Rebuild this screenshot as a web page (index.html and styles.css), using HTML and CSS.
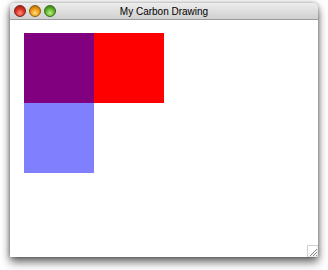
FILE: index.html
```html
<!DOCTYPE html>
<html>
<head>
<meta charset="utf-8">
<link rel="stylesheet" href="styles.css">
</head>
<body>
<div class="window">
  <div class="titlebar">
    <div class="lights">
      <span class="light red"></span>
      <span class="light orange"></span>
      <span class="light green"></span>
    </div>
    <div class="title">My Carbon Drawing</div>
  </div>
  <div class="content">
    <div class="grid">
      <div class="sq purple"></div>
      <div class="sq red"></div>
      <div class="sq blue"></div>
    </div>
    <svg class="grip" width="11" height="12" viewBox="0 0 11 12">
      <rect x="0.5" y="0.5" width="10.5" height="11.5" fill="#fff" stroke="#d0d0d0"/>
      <path d="M3 11 L10 4 M6 11 L10 7 M9 11 L10 10" stroke="#8a8a8a" stroke-width="1"/>
      <path d="M4 11 L10 5 M7 11 L10 8" stroke="#e8e8e8" stroke-width="1"/>
    </svg>
  </div>
</div>
</body>
</html>
```

FILE: styles.css
```css
html, body {
  margin: 0;
  padding: 0;
  background: #ffffff;
}
body {
  width: 328px;
  height: 270px;
  overflow: hidden;
  padding: 3px 0 0 10px;
  box-sizing: border-box;
}
.window {
  width: 308px;
  height: 254px;
  display: flex;
  flex-direction: column;
  background: #fff;
  border-radius: 5px 5px 0 0;
  box-shadow: 0 5px 10px rgba(0,0,0,0.6), 0 0 4px rgba(0,0,0,0.35);
  position: relative;
}
.titlebar {
  height: 16px;
  flex: none;
  border-radius: 5px 5px 0 0;
  background: linear-gradient(#ededed, #d0d0d0);
  border-bottom: 1px solid #9a9a9a;
  display: flex;
  align-items: center;
  position: relative;
}
.lights {
  display: flex;
  gap: 3px;
  padding-left: 4px;
  position: relative;
  z-index: 1;
}
.light {
  width: 12px;
  height: 12px;
  border-radius: 50%;
  box-sizing: border-box;
}
.light.red {
  background: radial-gradient(circle at 50% 70%, #ff8f80 0%, #d8321f 50%, #8e150b 100%);
  border: 1px solid #7a241c;
}
.light.orange {
  background: radial-gradient(circle at 50% 70%, #ffe07a 0%, #f09a10 50%, #9a5806 100%);
  border: 1px solid #8a5c16;
}
.light.green {
  background: radial-gradient(circle at 50% 70%, #c2f08a 0%, #5fb426 50%, #276c0e 100%);
  border: 1px solid #356c1c;
}
.title {
  position: absolute;
  left: 0;
  right: 0;
  top: 0;
  bottom: 0;
  text-align: center;
  font-family: "Liberation Sans", Arial, sans-serif;
  font-size: 10px;
  line-height: 18px;
  color: #000;
}
.content {
  flex: 1;
  position: relative;
  padding: 13px 0 0 14px;
}
.grid {
  display: grid;
  grid-template-columns: 70px 70px;
  grid-template-rows: 70px 70px;
}
.sq.purple { background: #800080; }
.sq.red { background: #ff0000; }
.sq.blue { background: #8080ff; }
.grip {
  position: absolute;
  right: 0;
  bottom: 0;
  display: block;
}
```
